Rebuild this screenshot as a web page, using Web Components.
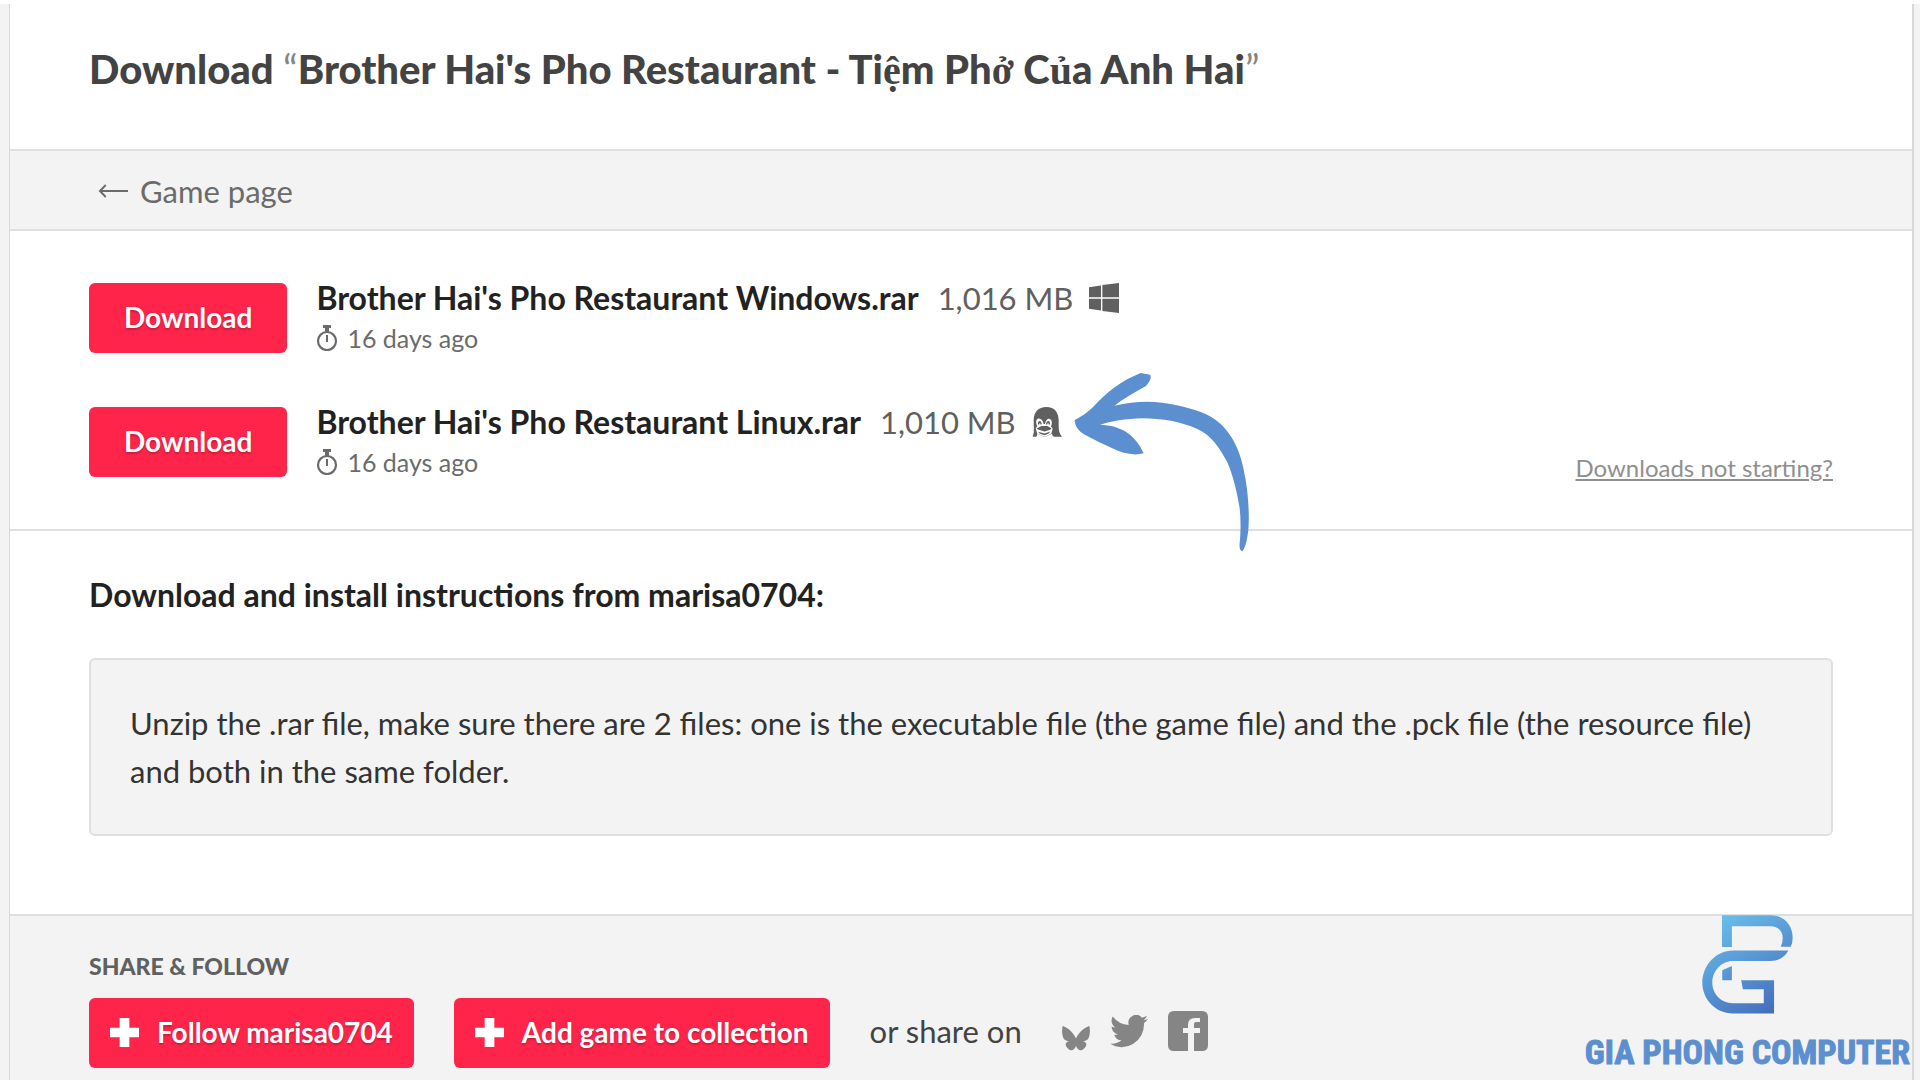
<!DOCTYPE html>
<html lang="en">
<head>
<meta charset="utf-8">
<title>Download Brother Hai's Pho Restaurant</title>
<style>
    body{
        margin: 0;
        background: #f3f3f3;
        color: #434343;
        font-family: Lato, "Open Sans", sans-serif;
        font-size: 31px;
    }
</style>
</head>
<body>
<game-page>
    <page-title slot="header">Brother Hai's Pho Restaurant - Ti<span class="alt">ệ</span>m Ph<span class="alt">ở</span> C<span class="alt">ủ</span>a Anh Hai</page-title>
    <back-bar slot="header" href="#game">Game page</back-bar>
    <upload-list>
        <upload-row size="1,016 MB" age="16 days ago" platform="windows">Brother Hai's Pho Restaurant Windows.rar</upload-row>
        <upload-row size="1,010 MB" age="16 days ago" platform="linux" pointed>Brother Hai's Pho Restaurant Linux.rar</upload-row>
        <a slot="help" href="#help">Downloads not starting?</a>
    </upload-list>
    <install-notes author="marisa0704">Unzip the .rar file, make sure there are 2 files: one is the executable file (the game file) and the .pck file (the resource file) and both in the same folder.</install-notes>
    <share-footer slot="footer" author="marisa0704"></share-footer>
</game-page>
<brand-mark>GIA PHONG COMPUTER</brand-mark>

<script>
const icons = {
    windows: {box: '0 0 90 86', path: '<path d="M0 12 36 7V41H0zM40 6 90 0V41H40zM0 45H36V79L0 74zM40 45H90V86L40 80z"/>'},
    linux: {box: '0 0 90 92', path: '<path d="M2 91C8 78 5 60 5 42 5 15 19 0 43 0 68 0 80 16 80 42 80 63 79 78 90 91H67C62 91 61 86 60 82L38 92 16 82C15 87 15 91 10 91z"/><path fill="#fff" d="M20 35C28 35 33 42 35 52H39C41 41 46 35 52 36 61 38 61 52 57 60L62 66 58 82 38 92 16 82 11 66 16 58C11 50 11 36 20 35z"/><path d="M18 54C16 40 29 38 29 54H25C25 47 22 47 22 54zM42 54C42 39 56 39 54 54H50C50 47 46 47 46 54zM14 66 28 58H46L59 66 54 70 38 75 20 70zM18 76 38 81 55 75 50 81 38 87 24 82z"/>'},
    clock: {box: '0 0 22 26', path: '<path d="M7 0h8v3h-2v4H9V3H7z"/><circle cx="11" cy="16" r="9" fill="none" stroke="currentColor" stroke-width="2.200"/><path d="M10 10h2v7h-2z"/>'},
    plus: {box: '0 0 30 30', path: '<path d="M10 0h10v10h10v10H20v10H10V20H0V10h10z"/>'},
    back: {box: '0 0 31 14', path: '<path d="M8 1 2 7l6 6M2 7h29" fill="none" stroke="currentColor" stroke-width="2"/>'},
    bluesky: {box: '0 0 84 76', path: '<path d="M2 0C17 4 34 20 42 38 50 20 67 4 82 0 85 12 84 29 79 38 76 44 69 46 63 46 74 49 76 57 69 65 58 79 47 75 42 60 37 75 26 79 15 65 8 57 10 49 21 46 15 46 8 44 5 38 0 29-1 12 2 0z"/>'},
    twitter: {box: '0 0 24 20', path: '<path d="M24 2.400a9.800 9.800 0 0 1-2.800.8A4.900 4.900 0 0 0 23.300.4a9.900 9.900 0 0 1-3.100 1.200A4.900 4.900 0 0 0 11.800 6.100 14 14 0 0 1 1.700.9a4.900 4.900 0 0 0 1.500 6.600A4.900 4.900 0 0 1 1 6.900a4.900 4.900 0 0 0 3.900 4.900 5 5 0 0 1-2.200.1 4.900 4.900 0 0 0 4.600 3.400A9.900 9.900 0 0 1 0 17.300 14 14 0 0 0 21.500 4.900 10 10 0 0 0 24 2.400z"/>'},
    facebook: {box: '0 0 40 40', path: '<path fill-rule="evenodd" d="M6 0H34Q40 0 40 6V34Q40 40 34 40H26V22H32V17H26V13Q26 11 28 11H32V7H27Q20 7 20 14V17H15V22H20V40H6Q0 40 0 34V6Q0 0 6 0z"/>'},
    pointer: {box: '820 336 528 540', path: '<path d="M822 480C850 465 862 455 878 440 920 395 960 363 1020 339L1048 344Q1056 355 1036 378C1000 398 965 418 942 437 1010 420 1075 423 1125 435 1180 447 1225 460 1260 492 1310 540 1325 600 1335 660 1345 720 1347 790 1341 825Q1336 860 1325 874 1315 870 1317 850C1320 820 1321 780 1317 745 1310 700 1297 645 1280 607 1255 560 1230 525 1190 507 1140 485 1085 475 1025 475 975 477 930 483 898 495 960 495 1005 525 1029 580 1000 588 965 580 935 565 900 548 870 536 840 516Q822 500 822 480z"/>'}
}

class AppIcon extends HTMLElement {
    constructor() {
        super();
        this.attachShadow({mode:'open'})
        const icon = icons[this.getAttribute('name')]
        this.shadowRoot.innerHTML = `
        <style>
            :host{
                display: inline-block;
                flex: none;
            }
            svg{
                display: block;
                width: 100%;
                height: 100%;
                fill: currentColor;
            }
        </style>
        <svg viewBox="${icon.box}" preserveAspectRatio="none" aria-hidden="true">${icon.path}</svg>
        `
    }
}

class GamePage extends HTMLElement {
    constructor() {
        super();
        this.attachShadow({mode:'open'})
        this.shadowRoot.innerHTML = `
        <style>
            :host{
                display: flex;
                flex-direction: column;
                box-sizing: border-box;
                min-height: 100vh;
                padding: 0 6px 0 9px;
                border-top: 4px solid #fff;
            }
            #card{
                flex: 1;
                display: flex;
                flex-direction: column;
                background: #fff;
                border: solid #d9d9d9;
                border-width: 0 2px 0 1px;
            }
        </style>
        <div id="card">
            <slot name="header"></slot>
            <slot></slot>
            <slot name="footer"></slot>
        </div>
        `
    }
}

class PageTitle extends HTMLElement {
    constructor() {
        super();
        this.attachShadow({mode:'open'})
        this.shadowRoot.innerHTML = `
        <style>
            :host{
                display: block;
                padding: 41px 79px 56px;
            }
            h1{
                margin: 0;
                font-size: 40px;
                line-height: 48px;
                font-weight: 900;
            }
            .quote{
                font-weight: normal;
                color: #858585;
            }
            ::slotted(.alt){
                font-family: "Liberation Serif", serif;
                line-height: 1;
            }
        </style>
        <h1>Download <span class="quote">“</span><slot></slot><span class="quote">”</span></h1>
        `
    }
}

class BackBar extends HTMLElement {
    constructor() {
        super();
        this.attachShadow({mode:'open'})
        this.shadowRoot.innerHTML = `
        <style>
            :host{
                display: flex;
                padding: 21px 88px 19px;
                background: #f3f3f3;
                border: solid #dfdfdf;
                border-width: 2px 0;
            }
            a{
                display: flex;
                align-items: center;
                gap: 12px;
                line-height: 38px;
                color: #6b6b6b;
                text-decoration: none;
            }
            app-icon{
                width: 30px;
                height: 14px;
            }
        </style>
        <a href="${this.getAttribute('href')}"><app-icon name="back"></app-icon><slot></slot></a>
        `
    }
}

class AppButton extends HTMLElement {
    constructor() {
        super();
        this.attachShadow({mode:'open'})
        const icon = this.getAttribute('icon')
        this.shadowRoot.innerHTML = `
        <style>
            :host{
                display: block;
                flex: none;
            }
            button{
                display: flex;
                align-items: center;
                gap: 18px;
                height: 70px;
                padding: 0 ${icon ? 21 : 35}px 2px;
                border: 0;
                border-radius: 6px;
                background: #ff2449;
                color: #fff;
                font: bold 28px/36px Lato, sans-serif;
                text-shadow: 0 2px 2px rgba(0,0,0,0.2);
                cursor: pointer;
            }
            app-icon{
                width: 29px;
                height: 29px;
            }
        </style>
        <button type="button">${icon ? `<app-icon name="${icon}"></app-icon>` : ''}<slot></slot></button>
        `
    }
}

class UploadList extends HTMLElement {
    constructor() {
        super();
        this.attachShadow({mode:'open'})
        this.shadowRoot.innerHTML = `
        <style>
            :host{
                display: flex;
                align-items: flex-end;
                justify-content: space-between;
                padding: 49px 79px;
                border-bottom: 2px solid #dfdfdf;
            }
            #rows{
                display: flex;
                flex-direction: column;
                gap: 48px;
            }
            ::slotted(a){
                font-size: 24px;
                line-height: 24px;
                color: #8f8f8f;
            }
        </style>
        <div id="rows"><slot></slot></div>
        <slot name="help"></slot>
        `
    }
}

class UploadRow extends HTMLElement {
    constructor() {
        super();
        this.attachShadow({mode:'open'})
        this.shadowRoot.innerHTML = `
        <style>
            :host{
                display: flex;
                align-items: center;
                gap: 29px;
            }
            #info{
                display: flex;
                flex-direction: column;
                gap: 4px;
            }
            .name{
                display: flex;
                align-items: center;
                line-height: 36px;
                color: #606060;
            }
            strong{
                margin-right: 19px;
                font-size: 32px;
                color: #222;
            }
            .platform{
                position: relative;
                display: flex;
                margin-left: 16px;
            }
            .platform app-icon{
                width: 30px;
                height: 30px;
            }
            .platform .pointer{
                position: absolute;
                left: 42px;
                top: -35px;
                width: 176px;
                height: 180px;
                color: #5b8fcf;
            }
            .age{
                display: flex;
                align-items: center;
                gap: 9px;
                font-size: 25px;
                line-height: 36px;
                color: #6b6b6b;
            }
            .age app-icon{
                width: 22px;
                height: 26px;
            }
        </style>
        <app-button>Download</app-button>
        <div id="info">
            <div class="name">
                <strong><slot></slot></strong>
                <span>${this.getAttribute('size')}</span>
                <span class="platform">
                    <app-icon name="${this.getAttribute('platform')}"></app-icon>
                    ${this.hasAttribute('pointed') ? '<app-icon class="pointer" name="pointer"></app-icon>' : ''}
                </span>
            </div>
            <div class="age"><app-icon name="clock"></app-icon><span>${this.getAttribute('age')}</span></div>
        </div>
        `
    }
}

class InstallNotes extends HTMLElement {
    constructor() {
        super();
        this.attachShadow({mode:'open'})
        this.shadowRoot.innerHTML = `
        <style>
            :host{
                display: block;
                padding: 44px 79px 78px;
            }
            h2{
                margin: 0 0 43px;
                font-size: 32px;
                line-height: 40px;
                color: #222;
            }
            p{
                margin: 0;
                padding: 39px;
                border: 2px solid #dfdfdf;
                border-radius: 6px;
                background: #f3f3f3;
                line-height: 48px;
                color: #333;
            }
        </style>
        <h2>Download and install instructions from ${this.getAttribute('author')}:</h2>
        <p><slot></slot></p>
        `
    }
}

class ShareFooter extends HTMLElement {
    constructor() {
        super();
        this.attachShadow({mode:'open'})
        this.shadowRoot.innerHTML = `
        <style>
            :host{
                display: block;
                flex: 1;
                padding: 36px 79px 12px;
                border-top: 2px solid #dfdfdf;
                background: #f3f3f3;
            }
            h3{
                margin: 0 0 18px;
                font-size: 23px;
                line-height: 28px;
                font-weight: 900;
                color: #606060;
            }
            #actions{
                display: flex;
                align-items: center;
                gap: 40px;
            }
            #links{
                display: flex;
                align-items: center;
                gap: 20px;
            }
            a{
                display: flex;
                color: #858585;
            }
            a:first-child{
                align-self: flex-end;
            }
            .bluesky{
                width: 28px;
                height: 25px;
            }
            .twitter{
                width: 38px;
                height: 33px;
            }
            .facebook{
                width: 40px;
                height: 40px;
            }
            #label, #links{
                padding-bottom: 4px;
            }
        </style>
        <h3>SHARE &amp; FOLLOW</h3>
        <div id="actions">
            <app-button icon="plus">Follow ${this.getAttribute('author')}</app-button>
            <app-button icon="plus">Add game to collection</app-button>
            <span id="label">or share on</span>
            <div id="links">
                <a href="#bluesky" aria-label="Bluesky"><app-icon class="bluesky" name="bluesky"></app-icon></a>
                <a href="#twitter" aria-label="Twitter"><app-icon class="twitter" name="twitter"></app-icon></a>
                <a href="#facebook" aria-label="Facebook"><app-icon class="facebook" name="facebook"></app-icon></a>
            </div>
        </div>
        `
    }
}

// watermark, lies over the page's bottom right corner
class BrandMark extends HTMLElement {
    constructor() {
        super();
        this.attachShadow({mode:'open'})
        this.shadowRoot.innerHTML = `
        <style>
            :host{
                position: absolute;
                right: 10px;
                bottom: 8px;
                display: flex;
                flex-direction: column;
                align-items: center;
                gap: 18px;
                color: #5b8fcf;
                font: bold 34px/40px "Liberation Sans Narrow", "Roboto Condensed", Roboto, sans-serif;
                -webkit-text-stroke: 1px #5b8fcf;
                white-space: nowrap;
            }
            svg{
                width: 91px;
                height: 99px;
            }
        </style>
        <svg viewBox="487 44 274 297" aria-hidden="true">
            <defs>
                <linearGradient id="blue" gradientUnits="userSpaceOnUse" x1="530" y1="60" x2="700" y2="330">
                    <stop offset="0" stop-color="#68bdea"/>
                    <stop offset="1" stop-color="#466fbd"/>
                </linearGradient>
            </defs>
            <path fill="url(#blue)" d="M547 44H693C735 44 760 75 760 112Q760 128 754 139H724Q730 128 730 112C730 90 715 77 693 77H577V140H547zM747 150C735 172 715 182 693 182H580C545 182 518 212 518 247S545 309 580 309H673V267H610L605 240H704V340H580C528 340 488 298 488 247S528 150 580 150zM548 210 577 197V240H548z"/>
        </svg>
        <span><slot></slot></span>
        `
    }
}

customElements.define('app-icon',AppIcon)
customElements.define('app-button',AppButton)
customElements.define('game-page',GamePage)
customElements.define('page-title',PageTitle)
customElements.define('back-bar',BackBar)
customElements.define('upload-list',UploadList)
customElements.define('upload-row',UploadRow)
customElements.define('install-notes',InstallNotes)
customElements.define('share-footer',ShareFooter)
customElements.define('brand-mark',BrandMark)
</script>
</body>
</html>
